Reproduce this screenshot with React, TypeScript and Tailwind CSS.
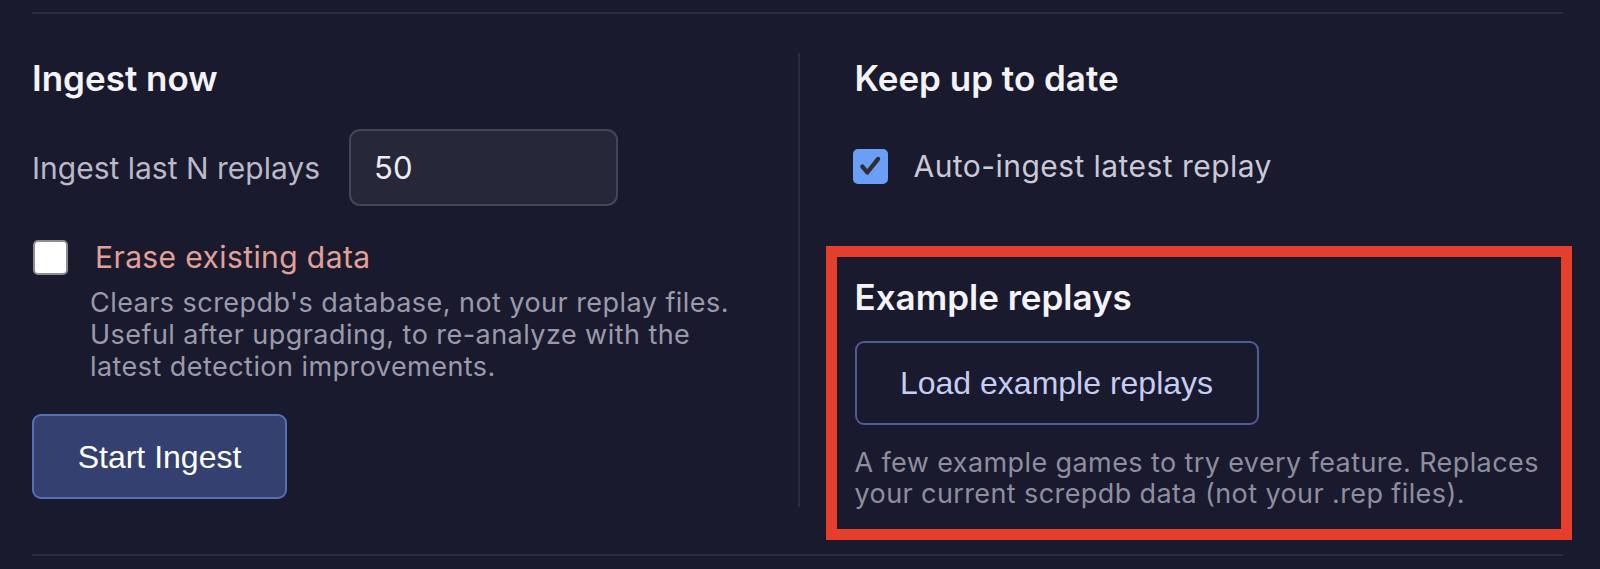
import React, { useState } from 'react';

const sans = "font-['Inter','Noto_Sans',sans-serif]";
const btnFont = "font-['Liberation_Sans','Arial',sans-serif]";

function CheckBox({ checked, onChange }: { checked: boolean; onChange: () => void }) {
  return (
    <button
      type="button"
      onClick={onChange}
      className={`flex h-[35px] w-[35px] shrink-0 items-center justify-center rounded-[5px] border-2 ${
        checked ? 'border-[#6b9ef5] bg-[#6b9ef5]' : 'border-[#8d8d95] bg-white'
      }`}
    >
      {checked && (
        <svg viewBox="0 0 24 24" className="h-[26px] w-[26px]">
          <path d="M5 12.5l4.5 5.5L19.5 5.5" fill="none" stroke="#2f2f33" strokeWidth="4" strokeLinecap="round" strokeLinejoin="round" />
        </svg>
      )}
    </button>
  );
}

export default function App() {
  const [count, setCount] = useState('50');
  const [erase, setErase] = useState(false);
  const [auto, setAuto] = useState(true);

  return (
    <div className={`min-h-[569px] w-full bg-[#1a1a2e] pl-[32px] pr-[37px] pt-[12px] ${sans}`}>
      <div className="border-t-2 border-[#2b2b40]">
        {/* Two columns */}
        <div className="mt-[39px] grid grid-cols-2">
          {/* Ingest now */}
          <div className="pt-[5px]">
            <h2 className="text-[35px] font-semibold leading-[40px] text-[#f4f4f8]">Ingest now</h2>

            <div className="mt-[31px] flex items-center gap-[29px]">
              <label className="text-[30px] leading-[34px] text-[#b9b9c8]">Ingest last N replays</label>
              <input
                value={count}
                onChange={(e) => setCount(e.target.value)}
                className="h-[77px] w-[269px] rounded-[11px] border-2 border-[#45455a] bg-[#27273a] pl-[23px] text-[31px] text-[#ececf2] outline-none"
              />
            </div>

            <div className="mt-[34px] flex items-center gap-[27px] pl-[1px]">
              <CheckBox checked={erase} onChange={() => setErase(!erase)} />
              <span className="text-[30px] leading-[35px] tracking-[0.4px] text-[#e2a196]">Erase existing data</span>
            </div>
            <p className="ml-[58px] mt-[12px] text-[27px] leading-[32px] tracking-[0.45px] text-[#9a9aab]">
              Clears screpdb's database, not your replay files.
              <br />
              Useful after upgrading, to re-analyze with the
              <br />
              latest detection improvements.
            </p>

            <button
              className={`mt-[31px] h-[85px] w-[255px] rounded-[9px] border-2 border-[#5670b6] bg-[#344170] text-[32px] text-white ${btnFont}`}
            >
              Start Ingest
            </button>
          </div>

          {/* Keep up to date */}
          <div className="border-l-2 border-[#2b2b40] pl-[55px] pt-[5px]">
            <h2 className="text-[35px] font-semibold leading-[40px] text-[#f4f4f8]">Keep up to date</h2>

            <div className="-ml-[2px] mt-[50px] flex items-center gap-[26px]">
              <CheckBox checked={auto} onChange={() => setAuto(!auto)} />
              <span className="text-[30px] leading-[36px] tracking-[0.45px] text-[#c9c9d8]">Auto-ingest latest replay</span>
            </div>

            {/* Example replays (highlighted) */}
            <div className="-mb-[33px] -ml-[29px] -mr-[9px] mt-[62px] border-[11px] border-[#e53e2b] px-[18px] pb-[20px] pt-[20px]">
              <h2 className="text-[35px] font-semibold leading-[40px] text-[#f4f4f8]">Example replays</h2>
              <button
                className={`mt-[24px] h-[84px] w-[404px] rounded-[9px] border-2 border-[#4d5c94] text-[32px] text-[#c5cdf3] ${btnFont}`}
              >
                Load example replays
              </button>
              <p className="mt-[22px] text-[27px] leading-[31px] tracking-[0.4px] text-[#8e8e9f]">
                A few example games to try every feature. Replaces
                <br />
                your current screpdb data (not your .rep files).
              </p>
            </div>
          </div>
        </div>

        <div className="mt-[47px] border-t-2 border-[#2b2b40]" />
      </div>
    </div>
  );
}
